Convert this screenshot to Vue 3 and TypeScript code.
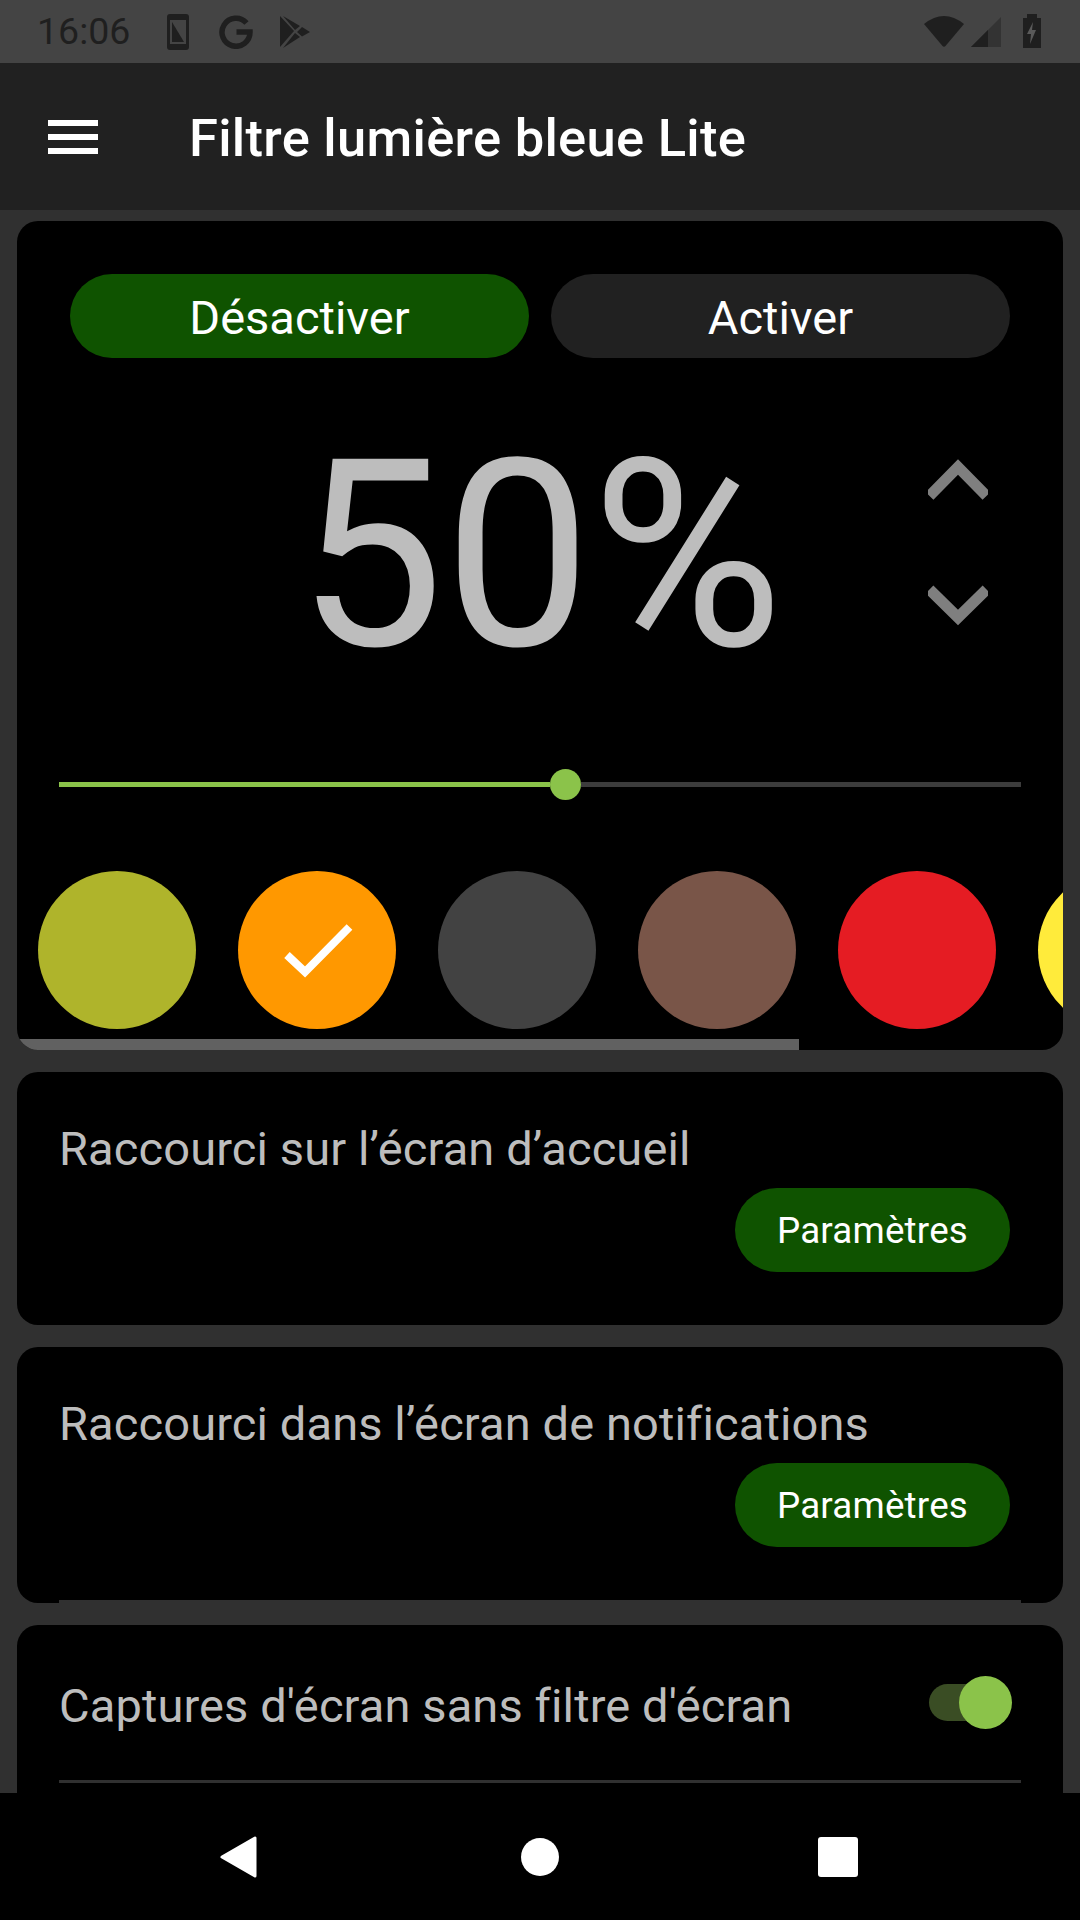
<script setup lang="ts">
const swatches = [
  { color: '#afb42b', checked: false },
  { color: '#ff9800', checked: true },
  { color: '#424242', checked: false },
  { color: '#795548', checked: false },
  { color: '#e51c23', checked: false },
  { color: '#ffeb3b', checked: false },
]

const shortcuts = [
  { label: 'Raccourci sur l’écran d’accueil', divider: false },
  { label: 'Raccourci dans l’écran de notifications', divider: true },
]

const level = 50
</script>

<template>
  <div class="screen">
    <div class="status-bar">
      <span class="time">16:06</span>
      <svg class="st-phone" width="24" height="36" viewBox="0 0 24 36">
        <rect x="1" y="0" width="22" height="36" rx="3" fill="#1f1f1f" />
        <rect x="4" y="6" width="16" height="24" fill="#444" />
        <path d="M6 8 L6 28 L18 28 Z" fill="#1f1f1f" />
      </svg>
      <svg class="st-g" width="34" height="34" viewBox="0 0 34 34">
        <path d="M27.5 8 A14 14 0 1 0 31 17 L17.5 17" fill="none" stroke="#1f1f1f" stroke-width="5.5" />
      </svg>
      <svg class="st-play" width="30" height="32" viewBox="0 0 30 32">
        <path d="M0 0 L14 15 L0 31 Z M3 0 L20 10 L15 14 Z M3 32 L20 21 L15 17 Z M22 11 L30 16 L22 20.5 L17 16 Z" fill="#1f1f1f" />
      </svg>
      <span class="spacer"></span>
      <svg class="st-wifi" width="40" height="31" viewBox="0 0 40 31">
        <path d="M0 8 Q20 -8 40 8 L21.5 30 Q20 31.5 18.5 30 Z" fill="#1f1f1f" />
      </svg>
      <svg class="st-signal" width="32" height="32" viewBox="0 0 32 32">
        <path d="M31 1 L31 31 L1 31 Z" fill="#333" />
        <path d="M18 14 L18 31 L1 31 Z" fill="#1f1f1f" />
      </svg>
      <svg class="st-battery" width="20" height="35" viewBox="0 0 20 35">
        <path d="M5 0 H15 V4 H19 V34 H1 V4 H5 Z" fill="#1f1f1f" />
        <path d="M11 8 L5 20 H9 L8 30 L14 16 H10 Z" fill="#5a5a5a" />
      </svg>
    </div>

    <header class="app-bar">
      <div class="menu-icon">
        <i></i>
        <i></i>
        <i></i>
      </div>
      <h1 class="title">Filtre lumière bleue Lite</h1>
    </header>

    <main class="content">
      <section class="card filter-card">
        <div class="mode-row">
          <div class="pill big green">Désactiver</div>
          <div class="pill big dark">Activer</div>
        </div>

        <div class="level-row">
          <span></span>
          <span class="level">{{ level }}%</span>
          <div class="arrows">
            <svg width="60" height="44" viewBox="0 0 60 44">
              <polyline points="1.5,38 30,9 58.5,38" fill="none" stroke="#7f7f7f" stroke-width="11" />
            </svg>
            <svg width="60" height="44" viewBox="0 0 60 44">
              <polyline points="1.5,7.5 30,35.5 58.5,7.5" fill="none" stroke="#7f7f7f" stroke-width="11" />
            </svg>
          </div>
        </div>

        <div class="slider">
          <div class="slider-on"></div>
          <div class="slider-thumb"></div>
          <div class="slider-off"></div>
        </div>

        <div class="swatches">
          <div
            v-for="s in swatches"
            :key="s.color"
            class="swatch"
            :style="{ background: s.color }"
          >
            <svg v-if="s.checked" width="158" height="158" viewBox="0 0 158 158">
              <polyline points="49,84 67,101 111.5,56" fill="none" stroke="#fff" stroke-width="8" />
            </svg>
          </div>
        </div>
        <div class="scrollbar"></div>
      </section>

      <section v-for="row in shortcuts" :key="row.label" class="card shortcut-card">
        <div class="card-label">{{ row.label }}</div>
        <div class="card-action">
          <div class="pill small green">Paramètres</div>
        </div>
        <div v-if="row.divider" class="divider"></div>
      </section>

      <section class="card toggle-card">
        <div class="toggle-row">
          <span class="card-label flat">Captures d'écran sans filtre d'écran</span>
          <div class="toggle">
            <div class="toggle-track"></div>
            <div class="toggle-thumb"></div>
          </div>
        </div>
        <div class="divider"></div>
      </section>
    </main>

    <nav class="nav-bar">
      <svg width="42" height="44" viewBox="0 0 42 44">
        <path d="M36 3 V41 L3 22 Z" fill="#fff" stroke="#fff" stroke-width="3" stroke-linejoin="round" />
      </svg>
      <div class="nav-home"></div>
      <div class="nav-recent"></div>
    </nav>
  </div>
</template>

<style scoped>
.screen {
  width: 1080px;
  height: 1920px;
  display: flex;
  flex-direction: column;
  overflow: hidden;
  background: #303030;
  font-family: Roboto, "Liberation Sans", sans-serif;
}

.status-bar {
  height: 63px;
  flex: none;
  display: flex;
  align-items: center;
  padding: 0 38px 0 37px;
  background: #444;
  color: #1f1f1f;
}

.time {
  font-size: 37.5px;
  line-height: 63px;
  width: 129px;
}

.st-g {
  margin-left: 29px;
}

.st-play {
  margin-left: 27px;
}

.spacer {
  flex: 1;
}

.st-signal {
  margin-left: 6px;
}

.st-battery {
  margin-left: 20px;
}

.app-bar {
  height: 147px;
  flex: none;
  display: flex;
  align-items: center;
  padding-left: 48px;
  background: #212121;
}

.menu-icon {
  width: 50px;
  display: flex;
  flex-direction: column;
  gap: 8px;
}

.menu-icon i {
  display: block;
  height: 6px;
  background: #fff;
}

.title {
  margin: 2px 0 0 91px;
  font-size: 52.5px;
  font-weight: 500;
  letter-spacing: 0.28px;
  color: #fff;
}

.content {
  flex: 1;
  min-height: 0;
  overflow: hidden;
  padding: 11px 17px 0;
  display: flex;
  flex-direction: column;
  gap: 22px;
}

.card {
  flex: none;
  background: #000;
  border-radius: 21px;
  overflow: hidden;
}

.filter-card {
  height: 829px;
  display: flex;
  flex-direction: column;
}

.mode-row {
  display: flex;
  gap: 22px;
  padding: 53px 53px 0;
}

.pill {
  display: flex;
  align-items: center;
  justify-content: center;
  height: 84px;
  border-radius: 42px;
  color: #fff;
}

.pill.big {
  flex: 1;
  font-size: 47px;
  padding-top: 2px;
  box-sizing: border-box;
}

.pill.small {
  width: 275px;
  font-size: 36.75px;
  letter-spacing: 0.2px;
}

.green {
  background: #0f5300;
}

.dark {
  background: #212121;
}

.level-row {
  display: grid;
  grid-template-columns: 1fr auto 1fr;
  align-items: center;
  height: 262px;
  margin-top: 67px;
}

.level {
  font-size: 262px;
  line-height: 262px;
  color: #bdbdbd;
}

.arrows {
  justify-self: end;
  display: flex;
  flex-direction: column;
  gap: 80px;
  padding: 0 75px 28px 0;
}

.arrows svg {
  display: block;
}

.slider {
  display: flex;
  align-items: center;
  height: 31px;
  margin: 82px 42px 0;
}

.slider-on {
  width: 491px;
  height: 5px;
  background: #8bc34a;
}

.slider-thumb {
  width: 31px;
  height: 31px;
  flex: none;
  border-radius: 50%;
  background: #8bc34a;
}

.slider-off {
  flex: 1;
  height: 5px;
  background: #3c3c3c;
}

.swatches {
  display: flex;
  gap: 42px;
  margin-top: 71px;
  padding-left: 21px;
}

.swatch {
  width: 158px;
  height: 158px;
  flex: none;
  border-radius: 50%;
}

.swatch svg {
  display: block;
}

.scrollbar {
  width: 782px;
  height: 11px;
  margin-top: 10px;
  background: #616161;
}

.card-label {
  padding: 49px 42px 0;
  font-size: 47px;
  line-height: 55px;
  letter-spacing: 0.12px;
  color: #bdbdbd;
}

.card-label.flat {
  padding: 0;
  margin-top: 5px;
}

.card-action {
  display: flex;
  justify-content: flex-end;
  padding: 12px 53px 53px;
}

.divider {
  height: 3px;
  margin: 0 42px;
  background: #303030;
}

.toggle-card {
  height: 320px;
}

.toggle-row {
  height: 155px;
  display: flex;
  align-items: center;
  justify-content: space-between;
  padding: 0 51px 0 42px;
}

.toggle {
  display: flex;
  align-items: center;
  width: 83px;
}

.toggle-track {
  width: 76px;
  height: 37px;
  flex: none;
  border-radius: 19px;
  background: #3a4d24;
}

.toggle-thumb {
  width: 53px;
  height: 53px;
  flex: none;
  margin-left: -46px;
  border-radius: 50%;
  background: #8bc34a;
}

.nav-bar {
  height: 127px;
  flex: none;
  display: flex;
  align-items: center;
  padding: 0 222px 0 219px;
  justify-content: space-between;
  background: #000;
}

.nav-home {
  width: 38px;
  height: 38px;
  border-radius: 50%;
  background: #fff;
}

.nav-recent {
  width: 40px;
  height: 40px;
  border-radius: 3px;
  background: #fff;
}
</style>

<style>
body {
  margin: 0;
  background: #303030;
}
</style>
